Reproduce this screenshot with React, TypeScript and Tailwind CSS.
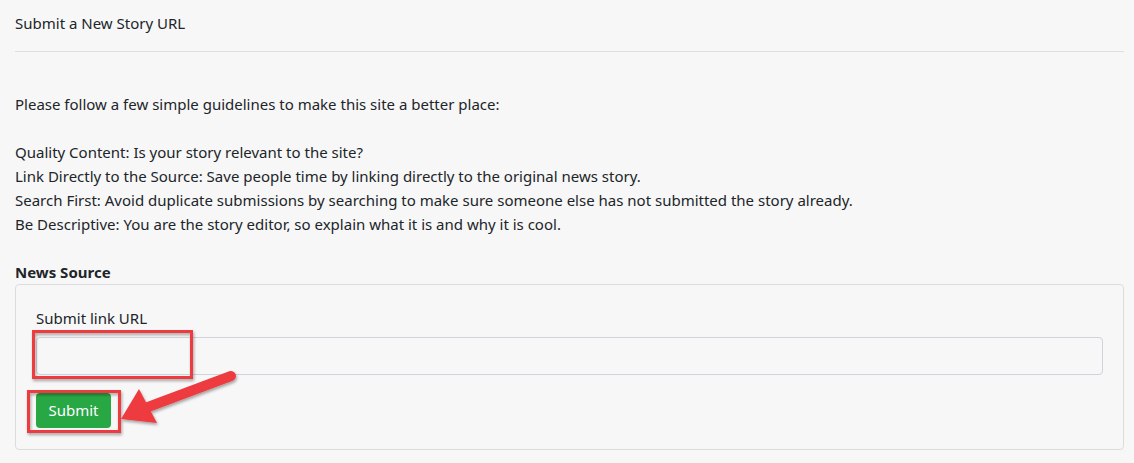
import React from "react"

const guidelines = [
  "Quality Content: Is your story relevant to the site?",
  "Link Directly to the Source: Save people time by linking directly to the original news story.",
  "Search First: Avoid duplicate submissions by searching to make sure someone else has not submitted the story already.",
  "Be Descriptive: You are the story editor, so explain what it is and why it is cool.",
]

const Annotations = () => (
  <svg
    className="absolute inset-0 pointer-events-none"
    width="1134"
    height="463"
    viewBox="0 0 1134 463"
  >
    <defs>
      <filter id="shadow" x="-20%" y="-20%" width="140%" height="140%">
        <feDropShadow dx="1" dy="2" stdDeviation="1.5" floodColor="#000" floodOpacity="0.35" />
      </filter>
    </defs>
    <g filter="url(#shadow)" fill="none" stroke="#ee3a3f" strokeWidth="3">
      <rect x="33.5" y="331.5" width="158" height="46" />
      <rect x="28.5" y="391.5" width="91" height="40" />
    </g>
    <g filter="url(#shadow)" fill="#ee3a3f">
      <line x1="231" y1="376" x2="148" y2="407" stroke="#ee3a3f" strokeWidth="10" strokeLinecap="round" />
      <polygon points="121,419 139,389 157,423" />
    </g>
  </svg>
)

export default function App() {
  return (
    <div
      className="relative w-[1134px] h-[463px] overflow-hidden bg-[#f7f7f7] pl-[15px] pr-[10px] text-[#212529] text-[15px]"
      style={{ fontFamily: "'Segoe UI', 'Noto Sans', 'Open Sans', sans-serif" }}
    >
      <h1 className="pt-[12px] leading-[22px] font-normal">Submit a New Story URL</h1>
      <hr className="mt-[17px] border-t border-[#dedede]" />

      <div className="mt-[40px] leading-[24px]">
        <p>Please follow a few simple guidelines to make this site a better place:</p>
        <br />
        {guidelines.map((g) => (
          <p key={g}>{g}</p>
        ))}
      </div>

      <h2 className="mt-[26px] leading-[21px] font-bold">News Source</h2>
      <div className="mt-[1px] h-[166px] rounded border border-[#dcdcdc] px-[20px] pt-[23px]">
        <label className="block leading-[21px]">Submit link URL</label>
        <input
          type="text"
          className="mt-[8px] block w-full h-[38px] rounded border border-[#ced4da] bg-[#f7f7f7]"
        />
        <button className="mt-[18px] h-[35px] w-[75px] rounded bg-[#28a745] text-white text-[15px]">
          Submit
        </button>
      </div>

      <Annotations />
    </div>
  )
}
